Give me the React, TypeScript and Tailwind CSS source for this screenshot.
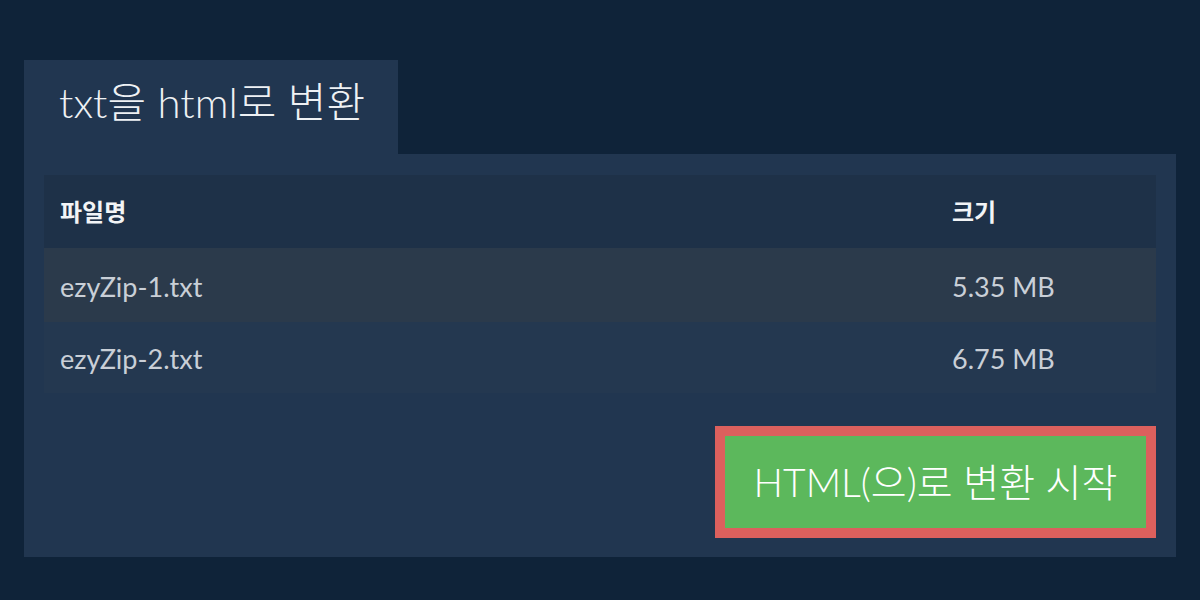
const files = [
  { name: "ezyZip-1.txt", size: "5.35 MB" },
  { name: "ezyZip-2.txt", size: "6.75 MB" },
]

export default function App() {
  return (
    <div
      className="h-[600px] w-[1200px] bg-[#0f2339] px-6 pt-[60px]"
      style={{ fontFamily: "Lato, 'Noto Sans CJK KR', sans-serif" }}
    >
      <div className="flex">
        <div className="flex h-[94px] w-[374px] items-start bg-[#213650] pl-[35px] pt-[16px]">
          <h1 className="text-[42px] font-light leading-[52px] text-[#eef1f4]">txt을 html로 변환</h1>
        </div>
      </div>
      <div className="flex h-[403px] flex-col bg-[#213650] px-5 pt-[21px]">
        <table className="w-full border-collapse text-left">
          <thead>
            <tr className="h-[73px] bg-[#1e3148]">
              <th className="pl-4 text-[24px] font-bold text-[#f2f4f6]">파일명</th>
              <th className="w-[204px] text-[24px] font-bold text-[#f2f4f6]">크기</th>
            </tr>
          </thead>
          <tbody>
            {files.map((f, i) => (
              <tr key={f.name} className={i === 0 ? "h-[74px] bg-[#2b3a4b]" : "h-[71px] bg-[#243850]"}>
                <td className="pl-4 pt-1 text-[27px] text-[#c9cfd7]">{f.name}</td>
                <td className="pt-1 text-[27px] text-[#c9cfd7]">{f.size}</td>
              </tr>
            ))}
          </tbody>
        </table>
        <div className="mt-[33px] flex justify-end">
          <button className="h-[112px] w-[441px] border-[10px] border-[#dc605d] bg-[#5cb85c] text-[39px] font-light text-white">
            HTML(으)로 변환 시작
          </button>
        </div>
      </div>
    </div>
  )
}
